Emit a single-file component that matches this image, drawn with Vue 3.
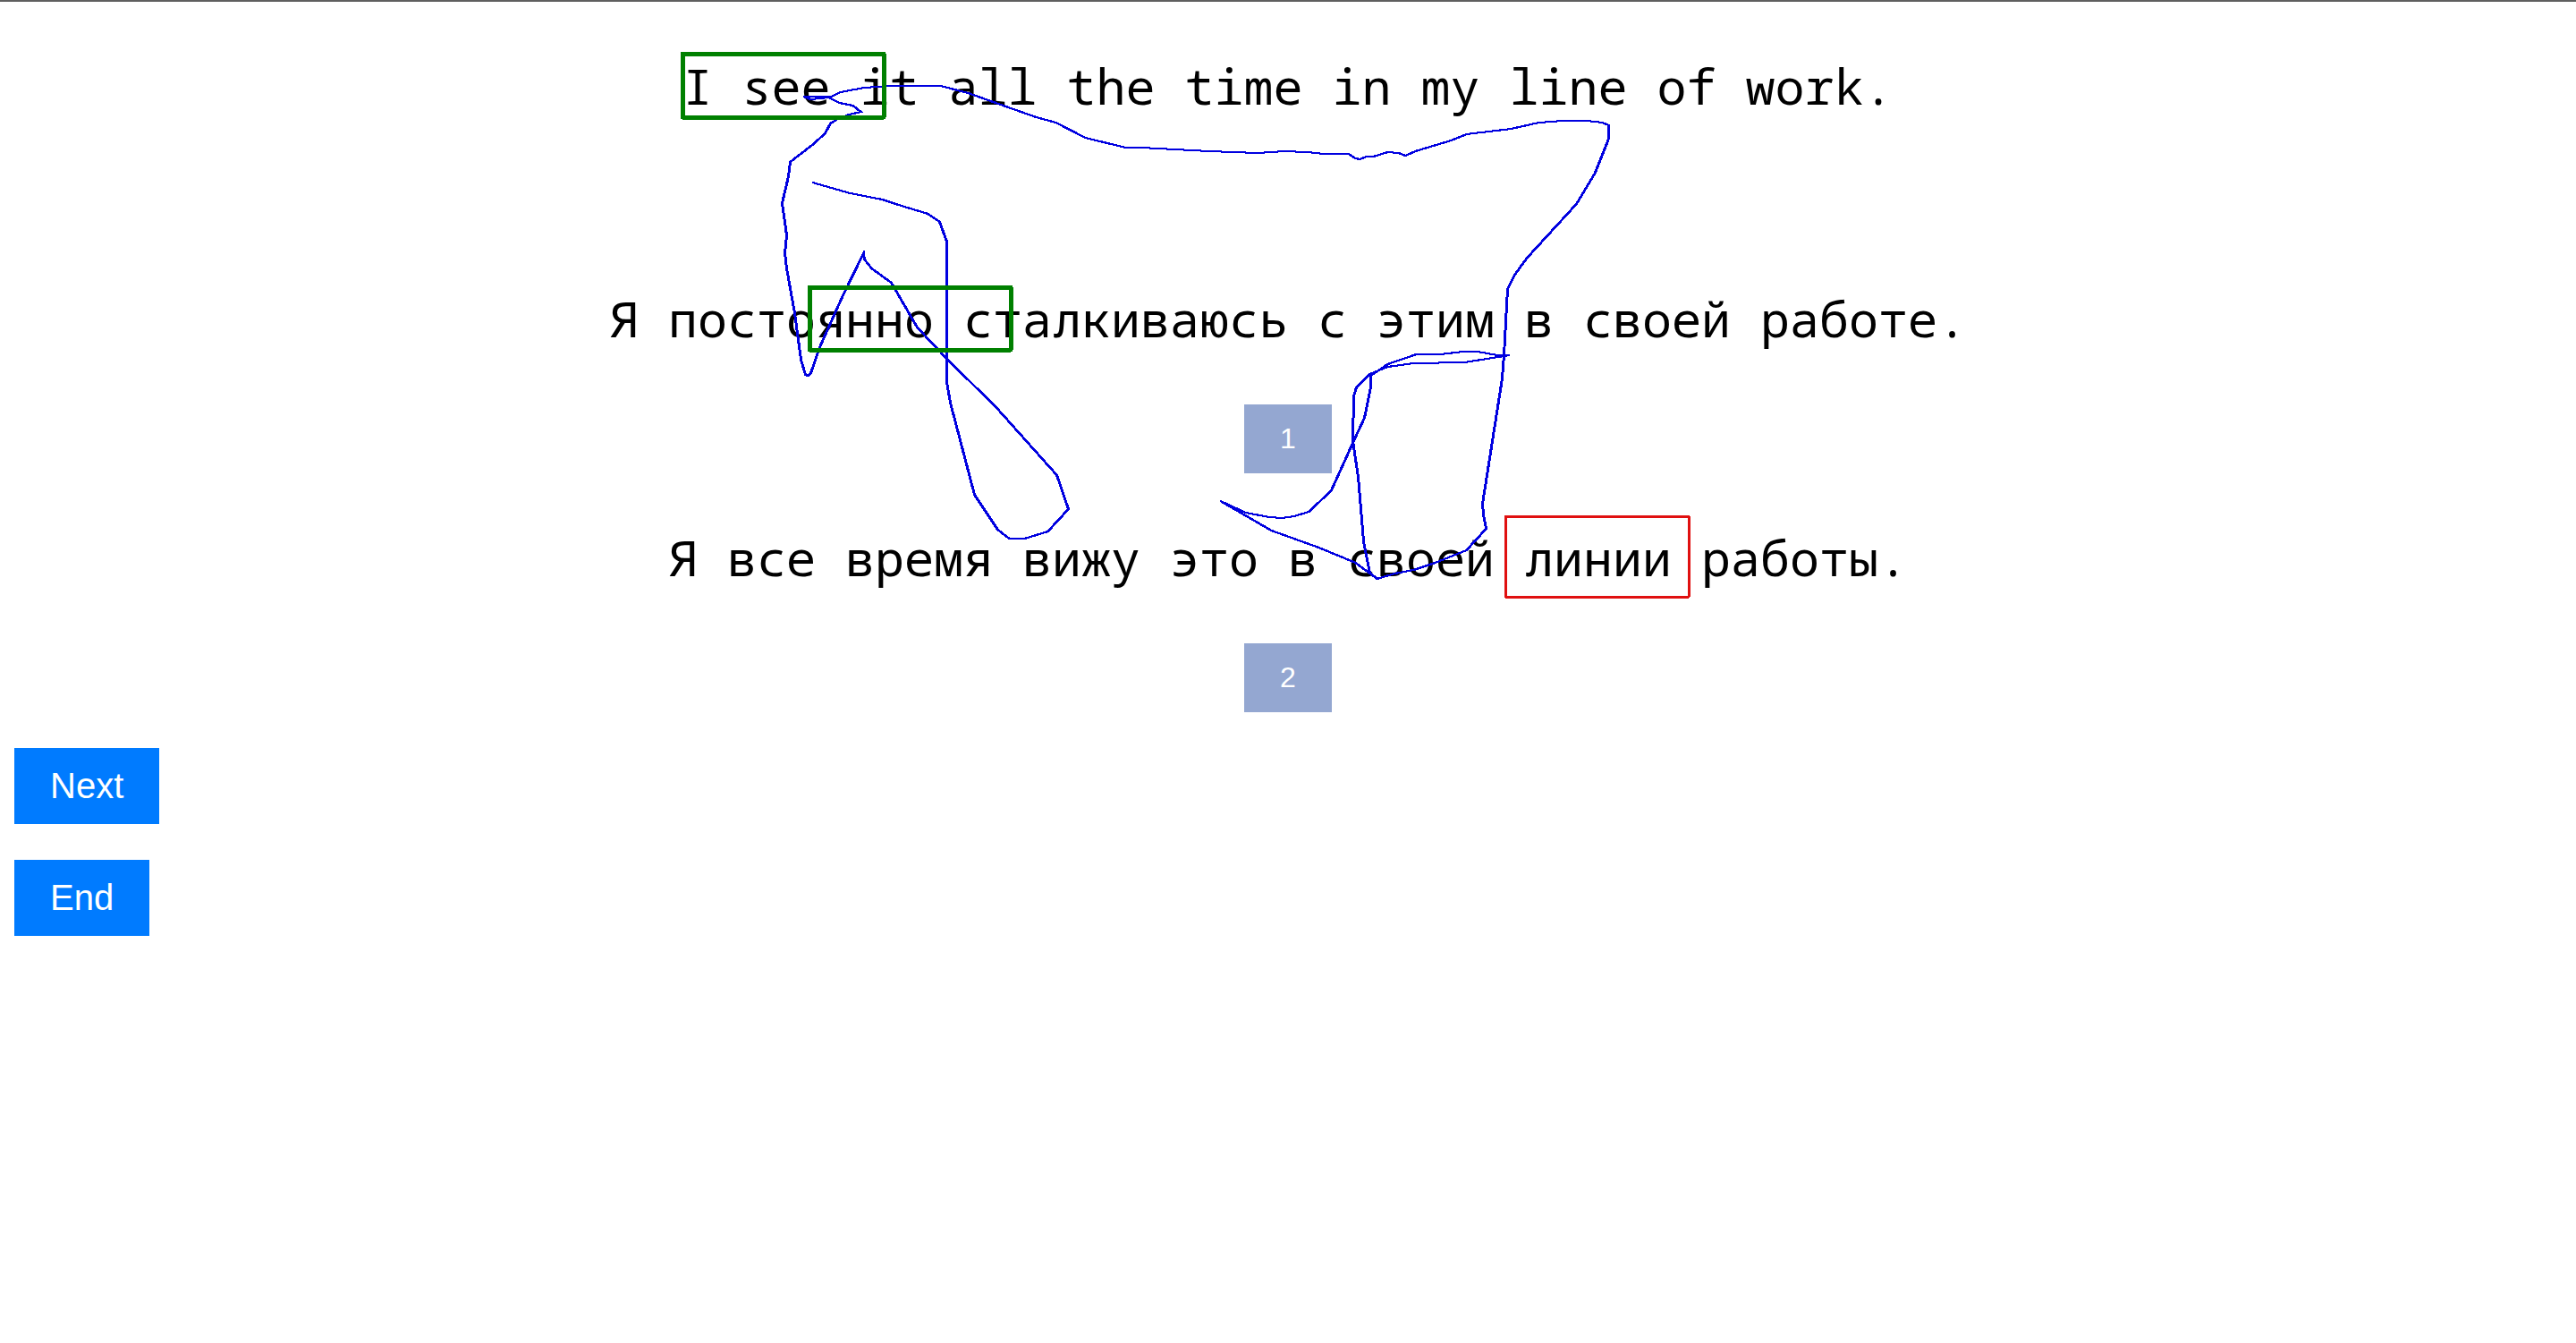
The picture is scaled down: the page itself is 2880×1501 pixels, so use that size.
<script setup>
import { ref } from 'vue'

const source = 'I see it all the time in my line of work.'
const variants = [
  { id: 1, text: 'Я постоянно сталкиваюсь с этим в своей работе.' },
  { id: 2, text: 'Я все время вижу это в своей линии работы.' },
]
const chosen = ref(null)

// Recorded pointer trail, in canvas units; x = 700 is the centre line of the text.
const trail = [
  [169, 204], [211, 216], [247, 223], [265, 229], [298, 239], [311, 248], [319, 270], [319, 313],
  [319, 427], [323, 450], [350, 553], [376, 592], [389, 602], [406, 602], [432, 594], [455, 569],
  [442, 531], [374, 455], [320, 402], [286, 366], [257, 316], [235, 300], [227, 290], [226, 283],
  [203, 330], [177, 388], [167, 417], [164, 420], [161, 419], [156, 402], [149, 350], [140, 300],
  [138, 283], [140, 263], [135, 227], [142, 197], [144, 181], [170, 161], [183, 149], [189, 138],
  [197, 133], [210, 128], [223, 125], [214, 118], [199, 115], [187, 109], [167, 111], [159, 108],
  [190, 108], [200, 103], [227, 98], [255, 96], [273, 96], [312, 96], [343, 104], [385, 119],
  [419, 131], [441, 137], [474, 154], [519, 165], [536, 165], [612, 169], [667, 171], [696, 169],
  [722, 170], [741, 172], [768, 172], [776, 177], [781, 178], [788, 175], [796, 175], [812, 170],
  [824, 171], [832, 174], [843, 169], [883, 157], [900, 150], [950, 144], [981, 137], [1008, 135],
  [1035, 135], [1052, 137], [1059, 140], [1059, 155], [1044, 193], [1023, 228], [968, 288],
  [954, 307], [946, 323], [942, 397], [940, 423], [918, 563], [919, 575], [922, 591], [900, 615],
  [865, 629], [841, 637], [820, 641], [800, 647], [792, 640], [785, 605], [779, 533], [773, 493],
  [774, 443], [777, 433], [792, 418], [812, 410], [841, 406], [898, 405], [948, 397], [935, 397],
  [912, 393], [896, 393], [871, 396], [844, 396], [812, 407], [793, 420], [793, 433], [786, 467],
  [773, 495], [749, 548], [724, 572], [707, 577], [694, 579], [680, 578], [653, 573], [625, 560],
  [682, 593], [735, 612], [776, 629], [799, 646],
]

const strokes = [0, -1].map((dx) => trail.map(([x, y]) => `${x + dx},${y}`).join(' '))
</script>

<template>
  <main class="page">
    <section class="task">
      <p class="sentence source">{{ source }}</p>
      <div v-for="v in variants" :key="v.id" class="variant">
        <p :id="`variant-${v.id}`" class="sentence">{{ v.text }}</p>
        <button
          type="button"
          class="pick"
          :aria-describedby="`variant-${v.id}`"
          :aria-pressed="chosen === v.id"
          @click="chosen = v.id"
        >{{ v.id }}</button>
      </div>

      <svg class="canvas" width="1400" height="800" viewBox="0 0 1400 800" aria-hidden="true">
        <polyline v-for="(points, i) in strokes" :key="i" class="trail" :points="points" />
        <rect class="gaze" x="165" y="321" width="225" height="70" />
        <rect class="gaze" x="23" y="60" width="225" height="71" />
        <rect class="error" x="943" y="577" width="205" height="90" />
      </svg>
    </section>

    <nav class="controls">
      <button type="button" class="control">Next</button>
      <button type="button" class="control">End</button>
    </nav>
  </main>
</template>

<style>
body {
  margin: 0;
  background: #fff;
}
</style>

<style scoped>
.page {
  border-top: 2px solid #5f5f5f;
}

.task {
  position: relative;
  display: flex;
  flex-direction: column;
  align-items: center;
  padding-top: 56px;
}

.sentence {
  margin: 0;
  color: #000;
  font: 55px/75px "Noto Sans Mono", "DejaVu Sans Mono", monospace;
  text-align: center;
}

.source {
  margin-bottom: 185px;
}

.variant {
  display: flex;
  flex-direction: column;
  align-items: center;
  gap: 59px;
}

.variant + .variant {
  margin-top: 56px;
}

.pick,
.control {
  border: 0;
  border-radius: 0;
  padding: 20px 40px;
  color: #fff;
  font-family: "Liberation Sans", Arial, sans-serif;
  cursor: pointer;
}

.pick {
  background: #94a7d1;
  font-size: 32px;
  line-height: 37px;
}

.controls {
  display: flex;
  flex-direction: column;
  align-items: flex-start;
  gap: 40px;
  padding: 40px 16px;
}

.control {
  background: #007bff;
  font-size: 40px;
  line-height: 45px;
}

.canvas {
  position: absolute;
  top: -2px;
  left: 50%;
  margin-left: -700px;
  pointer-events: none;
}

.gaze {
  fill: none;
  stroke: #008000;
  stroke-width: 5px;
  stroke-linejoin: round;
  shape-rendering: crispEdges;
}

.error {
  fill: none;
  stroke: #e01010;
  stroke-width: 3px;
  stroke-linejoin: round;
  shape-rendering: crispEdges;
}

.trail {
  fill: none;
  stroke: #0000e0;
  stroke-width: 2px;
  shape-rendering: crispEdges;
}
</style>
